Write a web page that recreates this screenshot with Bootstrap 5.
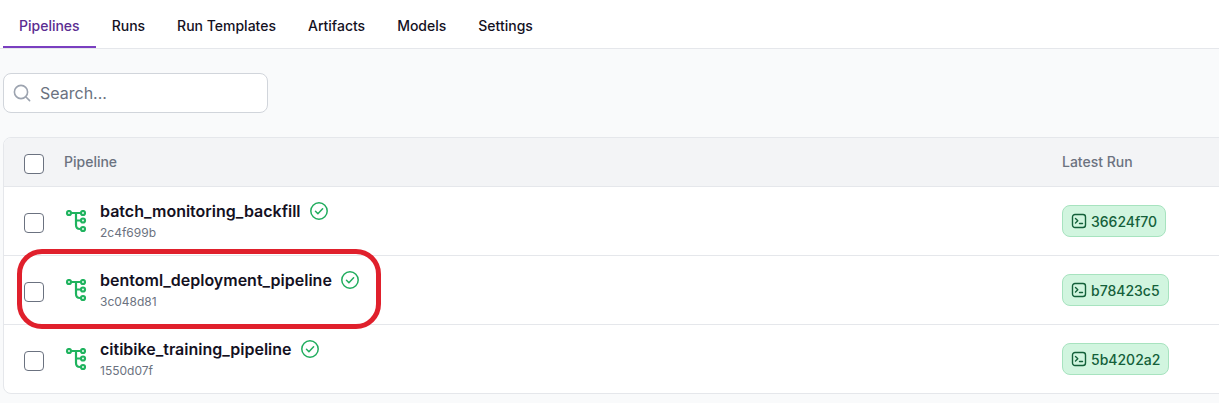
<!DOCTYPE html>
<html lang="en">
<head>
  <meta charset="UTF-8" />
  <title>Pipelines</title>
  <link href="https://cdn.jsdelivr.net/npm/bootstrap@5.3.0/dist/css/bootstrap.min.css" rel="stylesheet"/>
  <style>
    body { background: #f9fafb; font-family: Inter, "Liberation Sans", sans-serif; color: #14111f; overflow: hidden; }
    .tabbar { height: 49px; background: #fff; border-bottom: 1px solid #e5e7eb; padding-left: 3px; }
    .tab-item { padding: 0 16px; height: 48px; line-height: 52px; font-size: 14px; font-weight: 500; color: #14111f; text-decoration: none; }
    .tab-item.on { color: #5b2d91; border-bottom: 2px solid #7a3fc0; }
    .page-body { padding: 24px 0 0 3px; }
    .searchbox { width: 265px; height: 40px; background: #fff; border: 1px solid #d1d5db; border-radius: 8px; padding-left: 8px; gap: 8px; color: #6b7280; font-size: 16px; }
    .pipe-table { margin-top: 24px; width: 1240px; height: 257px; background: #fff; border: 1px solid #e5e7eb; border-radius: 8px; overflow: hidden; }
    .head-row { height: 49px; padding-bottom: 2px; background: #f3f4f6; border-bottom: 1px solid #e5e7eb; font-size: 14px; font-weight: 500; color: #6b7280; }
    .pipe-row { height: 69px; border-bottom: 1px solid #e5e7eb; }
    .pipe-row:last-child { height: 68px; border-bottom: 0; }
    .tick-cell { width: 60px; padding-left: 20px; }
    .head-row .tick-cell { padding-top: 6px; }
    .pipe-row .tick-cell { padding-top: 3px; }
    .tickbox { display: block; width: 20px; height: 20px; border: 1px solid #6b7280; border-radius: 4px; background: #fff; }
    .name-cell { flex: 1 1 auto; }
    .run-cell { width: 180px; flex: none; }
    .pipe-ico { width: 24px; height: 24px; margin: 2px 12px 0 0; flex: none; }
    .pipe-name { font-size: 16px; font-weight: 600; line-height: 20px; }
    .pipe-hash { font-size: 12px; color: #6b7280; line-height: 16px; margin-top: 4px; }
    .run-pill { display: inline-flex; align-items: center; gap: 4px; height: 32px; padding: 0 8px; background: #d1f5df; border: 1px solid #a7e3bf; border-radius: 8px; color: #14603a; font-size: 14px; font-weight: 500; }
    .red-mark { position: absolute; left: 17px; top: 249px; width: 364px; height: 80px; border: 5px solid #e0202c; border-radius: 25px; pointer-events: none; }
  </style>
</head>
<body>
  <nav class="tabbar d-flex">
    <a class="tab-item on" href="#">Pipelines</a>
    <a class="tab-item" href="#">Runs</a>
    <a class="tab-item" href="#">Run Templates</a>
    <a class="tab-item" href="#">Artifacts</a>
    <a class="tab-item" href="#">Models</a>
    <a class="tab-item" href="#">Settings</a>
  </nav>

  <main class="page-body">
    <div class="searchbox d-flex align-items-center">
      <svg width="20" height="20" viewBox="0 0 20 20" fill="none" stroke="#9ca3af" stroke-width="1.6" stroke-linecap="round"><circle cx="9" cy="9" r="6.6"/><path d="M14 14l3.6 3.6"/></svg>
      <span>Search...</span>
    </div>

    <div class="pipe-table">
      <div class="head-row d-flex align-items-center">
        <div class="tick-cell"><span class="tickbox"></span></div>
        <div class="name-cell">Pipeline</div>
        <div class="run-cell">Latest Run</div>
      </div>

      <div class="pipe-row d-flex align-items-center">
        <div class="tick-cell"><span class="tickbox"></span></div>
        <div class="name-cell d-flex align-items-center">
          <svg class="pipe-ico"><use href="#tree-ico"/></svg>
          <div>
            <div class="d-flex align-items-center gap-2"><span class="pipe-name">batch_monitoring_backfill</span><svg width="20" height="20"><use href="#ok-ico"/></svg></div>
            <div class="pipe-hash">2c4f699b</div>
          </div>
        </div>
        <div class="run-cell"><span class="run-pill"><svg width="16" height="16"><use href="#run-ico"/></svg>36624f70</span></div>
      </div>

      <div class="pipe-row d-flex align-items-center">
        <div class="tick-cell"><span class="tickbox"></span></div>
        <div class="name-cell d-flex align-items-center">
          <svg class="pipe-ico"><use href="#tree-ico"/></svg>
          <div>
            <div class="d-flex align-items-center gap-2"><span class="pipe-name">bentoml_deployment_pipeline</span><svg width="20" height="20"><use href="#ok-ico"/></svg></div>
            <div class="pipe-hash">3c048d81</div>
          </div>
        </div>
        <div class="run-cell"><span class="run-pill"><svg width="16" height="16"><use href="#run-ico"/></svg>b78423c5</span></div>
      </div>

      <div class="pipe-row d-flex align-items-center">
        <div class="tick-cell"><span class="tickbox"></span></div>
        <div class="name-cell d-flex align-items-center">
          <svg class="pipe-ico"><use href="#tree-ico"/></svg>
          <div>
            <div class="d-flex align-items-center gap-2"><span class="pipe-name">citibike_training_pipeline</span><svg width="20" height="20"><use href="#ok-ico"/></svg></div>
            <div class="pipe-hash">1550d07f</div>
          </div>
        </div>
        <div class="run-cell"><span class="run-pill"><svg width="16" height="16"><use href="#run-ico"/></svg>5b4202a2</span></div>
      </div>
    </div>
  </main>

  <div class="red-mark"></div>

  <svg width="0" height="0" class="d-block">
    <symbol id="tree-ico" viewBox="0 0 24 24" fill="none" stroke="#1fb35e" stroke-width="2.2">
      <circle cx="5" cy="3" r="2"/><circle cx="19" cy="3" r="2"/><circle cx="19" cy="10.5" r="2"/><circle cx="19" cy="19" r="2"/>
      <path d="M7 3h10M12 3v12q0 4 4 4h1M12 10.5h5"/>
    </symbol>
    <symbol id="ok-ico" viewBox="0 0 20 20" fill="none" stroke="#22ad5f" stroke-width="1.5" stroke-linecap="round" stroke-linejoin="round">
      <circle cx="10" cy="10" r="8.2"/><path d="M6.5 10.3l2.4 2.4 4.7-5"/>
    </symbol>
    <symbol id="run-ico" viewBox="0 0 16 16" fill="none" stroke="#14603a" stroke-width="1.4" stroke-linecap="round" stroke-linejoin="round">
      <rect x="1.5" y="1.5" width="13" height="13" rx="2.5"/><path d="M4.5 5.5l2.3 2.2-2.3 2.2M8.5 10.5h3"/>
    </symbol>
  </svg>
  <script src="https://cdn.jsdelivr.net/npm/bootstrap@5.3.0/dist/js/bootstrap.bundle.min.js"></script>
</body>
</html>
